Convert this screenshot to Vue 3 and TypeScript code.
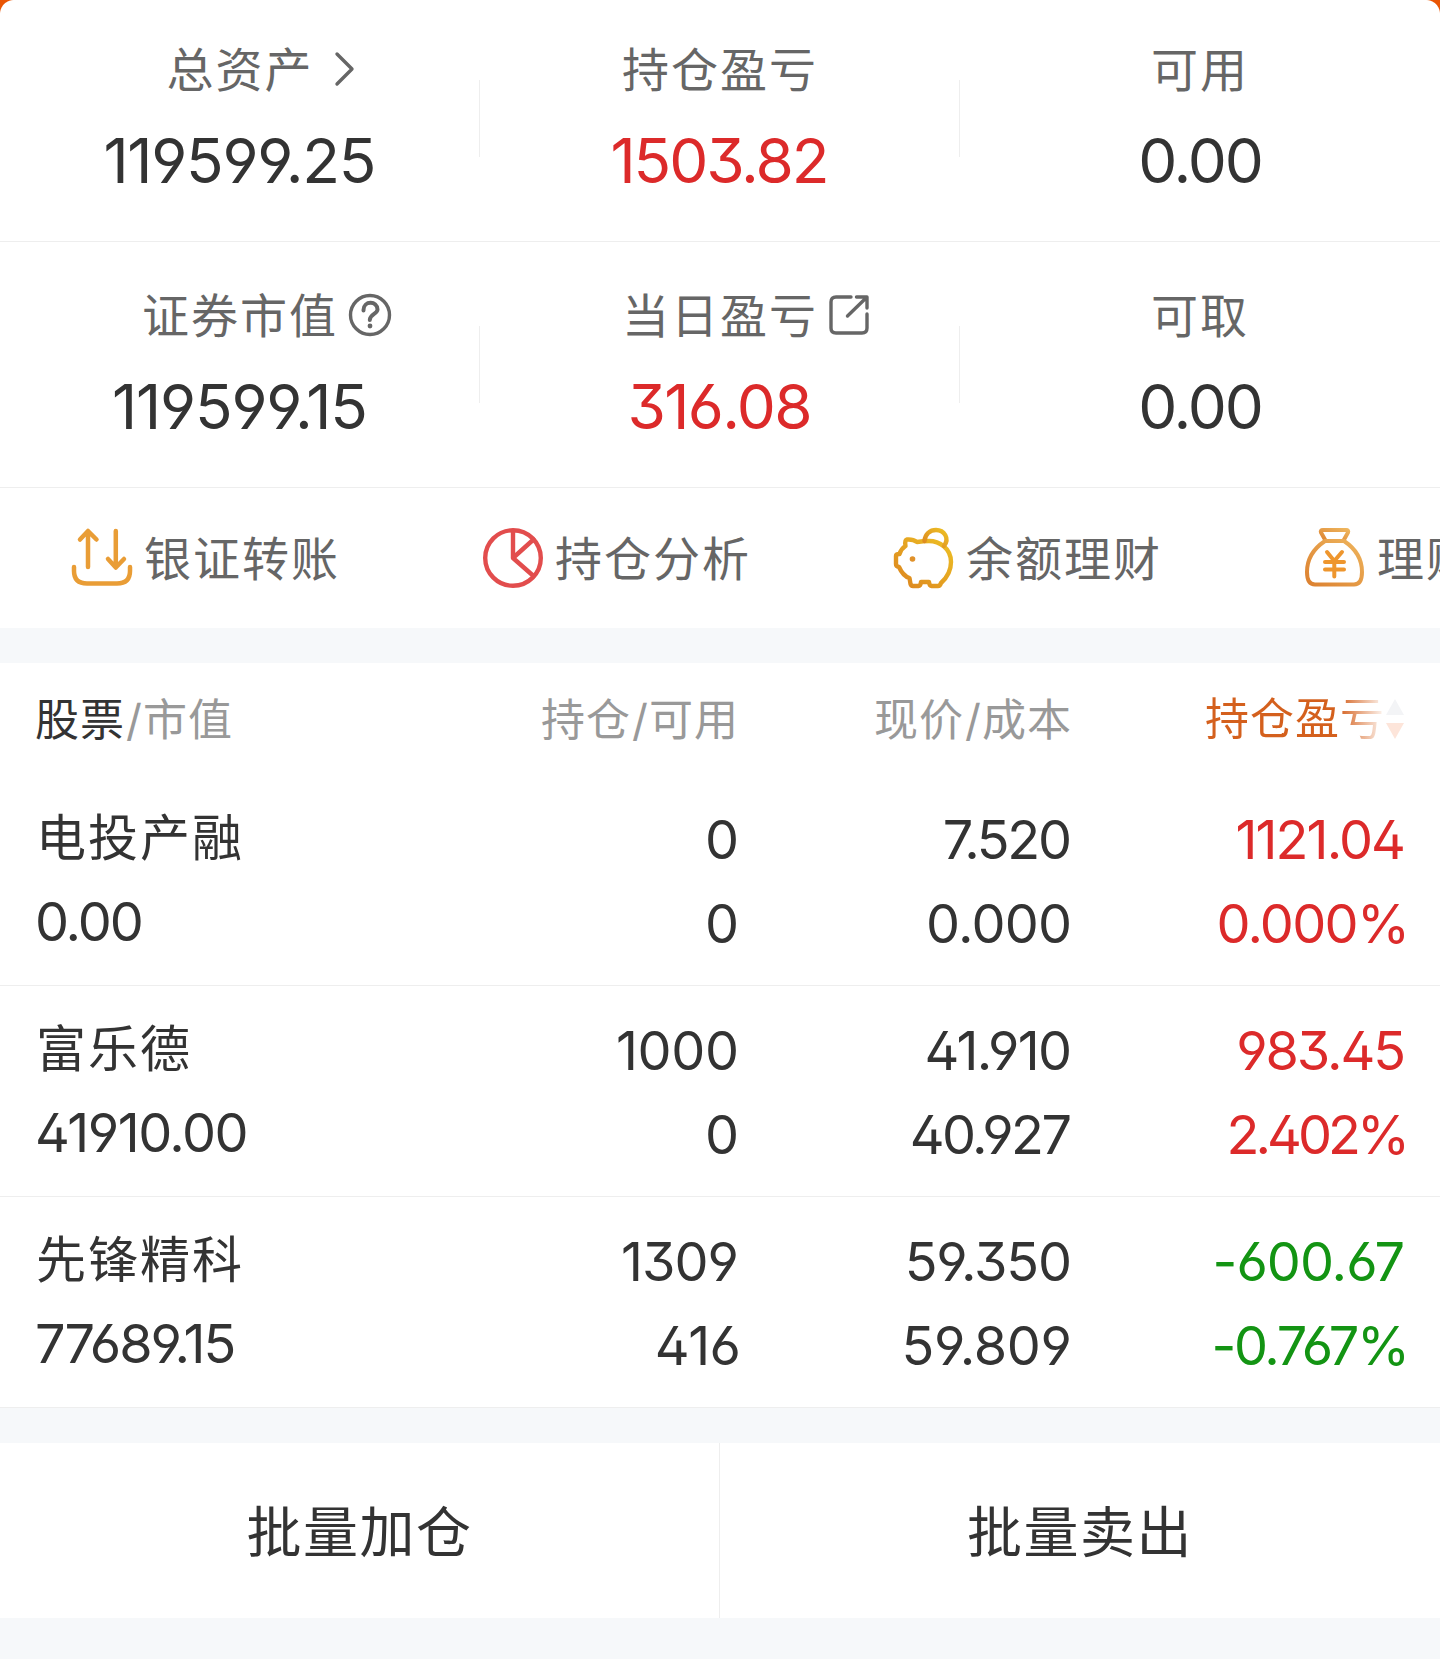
<script setup lang="ts">
type Tone = 'dark' | 'up' | 'down'
// s: letter spacing, dx: optical shift past the right edge of the column
interface Num { v: string; s?: number; dx?: number }
interface Stat { label: string; num: Num; tone: Tone; icon?: string }
interface Holding { name: string; value: Num; cells: [Num, Num][]; tone: Tone }

const stats: Stat[][] = [
  [
    { label: '总资产', num: { v: '119599.25', s: -1.3 }, tone: 'dark', icon: 'chevron' },
    { label: '持仓盈亏', num: { v: '1503.82', s: -2.1 }, tone: 'up' },
    { label: '可用', num: { v: '0.00', s: -2.1, dx: 2 }, tone: 'dark' },
  ],
  [
    { label: '证券市值', num: { v: '119599.15', s: -1.2 }, tone: 'dark', icon: 'help' },
    { label: '当日盈亏', num: { v: '316.08', s: -1.7 }, tone: 'up', icon: 'share' },
    { label: '可取', num: { v: '0.00', s: -2.1, dx: 2 }, tone: 'dark' },
  ],
]

const tools = [
  { icon: 'transfer', label: '银证转账' },
  { icon: 'pie', label: '持仓分析' },
  { icon: 'piggy', label: '余额理财' },
  { icon: 'bag', label: '理财' },
]

const holdings: Holding[] = [
  {
    name: '电投产融', value: { v: '0.00', s: -2.1 }, tone: 'up',
    cells: [
      [{ v: '0' }, { v: '0' }],
      [{ v: '7.520', s: -2.3 }, { v: '0.000', s: -0.8 }],
      [{ v: '1121.04', s: -1.9 }, { v: '0.000%', s: -1.7, dx: 4 }],
    ],
  },
  {
    name: '富乐德', value: { v: '41910.00', s: -1.5 }, tone: 'up',
    cells: [
      [{ v: '1000', s: -0.4 }, { v: '0' }],
      [{ v: '41.910', s: -1.7 }, { v: '40.927', s: -2.6 }],
      [{ v: '983.45', s: -2.1 }, { v: '2.402%', s: -4, dx: 4 }],
    ],
  },
  {
    name: '先锋精科', value: { v: '77689.15', s: -2 }, tone: 'down',
    cells: [
      [{ v: '1309', s: -1 }, { v: '416', s: -0.5, dx: 2 }],
      [{ v: '59.350', s: -1.2 }, { v: '59.809', s: -0.3 }],
      [{ v: '-600.67', s: -1, dx: -1 }, { v: '-0.767%', s: -2.3, dx: 4 }],
    ],
  },
]

const actions = ['批量加仓', '批量卖出']

const spacing = ({ s = 0, dx = 0 }: Num) => ({
  letterSpacing: `${s}px`,
  marginRight: `${-s - dx}px`,
})
</script>

<template>
  <div class="page">
    <section class="card">
      <div v-for="(row, r) in stats" :key="r" class="stat-row">
        <div v-for="s in row" :key="s.label" class="stat">
          <div class="stat-label">
            {{ s.label }}
            <svg v-if="s.icon === 'chevron'" class="ic-chevron" viewBox="0 0 20 36"><path d="M3 3 18 18 3 33" /></svg>
            <svg v-if="s.icon === 'help'" class="ic-help" viewBox="0 0 42 42">
              <circle cx="21" cy="21" r="19.5" />
              <path d="M14.5 16.5V16C14.5 6.500 28.500 6.500 28.500 15.500C28.500 20 21 20 20.800 26" stroke-width="4" />
              <circle cx="21" cy="32" r="2.4" class="dot" />
            </svg>
            <svg v-if="s.icon === 'share'" class="ic-share" viewBox="0 0 40 40">
              <path d="M22 2H7Q2 2 2 7V33Q2 38 7 38H33Q38 38 38 33V19M27.5 2H38V13M37 3 18.5 21" />
            </svg>
          </div>
          <div class="stat-num num" :class="s.tone"><span :style="spacing(s.num)">{{ s.num.v }}</span></div>
        </div>
      </div>

      <div class="tools">
        <div v-for="t in tools" :key="t.icon" class="tool">
          <svg v-if="t.icon === 'transfer'" viewBox="0 0 60 60" stroke="#e99d36" stroke-width="4.5">
            <path d="M16 39V4M8 11.5 16 3 24.5 11.5M43.8 3V38M36 31 43.8 39.5 52 31" />
            <path d="M2 39V43Q2 55.5 15 55.5H45Q58 55.5 58 43V39" />
          </svg>
          <svg v-else-if="t.icon === 'pie'" viewBox="0 0 60 60" stroke="#e24d4d" stroke-width="4.4">
            <circle cx="30" cy="30" r="27.8" />
            <path d="M30 3V30L50.5 11.5M30 30 50.5 48" />
          </svg>
          <svg v-else-if="t.icon === 'piggy'" viewBox="0 0 60 60" stroke="url(#pig)" stroke-width="4.4">
            <defs><linearGradient id="pig" x1="1" y1="0" x2="0" y2="1"><stop offset="0" stop-color="#edc024" /><stop offset="1" stop-color="#dc841f" /></linearGradient></defs>
            <path d="M23 14Q19 11 13 11.5Q10.5 12 11.5 18Q7 21 5.5 26Q2 26 2 28V36Q2 38.5 5 39Q9 48 15.5 50L16.5 56Q17 58 19 58H24.5Q26.5 58 27 54H35Q35.5 58 37.5 58H44Q46 58 47 55Q57 46 57 34C57 20 45 13 35 13Q29 13 23 14Z" />
            <path d="M30.5 13C31 6 36 2 42 2C50 2 56 10 50 18" />
            <circle cx="18.5" cy="31" r="2.8" fill="#e0912a" stroke="none" />
          </svg>
          <svg v-else viewBox="0 0 60 60" stroke="url(#bag)" stroke-width="4">
            <defs><linearGradient id="bag" x1="1" y1="0" x2="0" y2="1"><stop offset="0" stop-color="#eeb45c" /><stop offset="1" stop-color="#dc8130" /></linearGradient></defs>
            <path d="M20.5 12.5 16 4.5Q15 2 18 2H41Q44 2 43 4.5L38.5 12.5" />
            <path d="M20 13H39Q57 25 57 44Q57 56.5 49 56.5H10Q2 56.5 2 44Q2 25 20 13Z" />
            <path d="M22 24 29.3 33 37 24M29.3 34V48.5M20 34H39M20 41.5H39" stroke="#ee962e" />
          </svg>
          <span>{{ t.label }}</span>
        </div>
      </div>
    </section>

    <section class="table">
      <div class="head">
        <div class="c1"><b>股票</b><i>/</i>市值</div>
        <div class="c2">持仓<i>/</i>可用</div>
        <div class="c3">现价<i>/</i>成本</div>
        <div class="c4 sorted">
          <span>持仓盈亏</span>
          <svg class="sort" viewBox="0 0 20 42"><path d="M10 1 19 17H1Z" fill="#f3f4f6" /><path d="M1 25H19L10 41Z" fill="#fde5da" /></svg>
        </div>
      </div>
      <div v-for="h in holdings" :key="h.name" class="holding">
        <div class="c1">
          <div class="name">{{ h.name }}</div>
          <div class="num value"><span :style="spacing(h.value)">{{ h.value.v }}</span></div>
        </div>
        <div v-for="(pair, i) in h.cells" :key="i" class="cell num" :class="['c' + (i + 2), i === 2 ? h.tone : 'dark']">
          <div v-for="(n, j) in pair" :key="j"><span :style="spacing(n)">{{ n.v }}</span></div>
        </div>
      </div>
    </section>

    <section class="actions">
      <button v-for="a in actions" :key="a" type="button">{{ a }}</button>
    </section>
  </div>
</template>

<style>
body { margin: 0; background: #f6f8fa; }
</style>

<style scoped>
.page {
  display: flex; flex-direction: column; box-sizing: border-box;
  width: 1440px; height: 1659px; overflow: hidden; background: #f6f8fa; color: #333;
  font-family: Inter, 'Noto Sans CJK SC', sans-serif;
}
.card {
  height: 628px; overflow: hidden; flex: none;
  background:
    radial-gradient(circle at 14px 14px, #fff 13.5px, #e95504 14.5px) 0 0 / 14px 14px no-repeat,
    radial-gradient(circle at 0 14px, #fff 13.5px, #e95504 14.5px) 100% 0 / 14px 14px no-repeat,
    #fff;
}
.num { font-feature-settings: 'ss01', 'cv09', 'cv03', 'cv04'; white-space: nowrap; }
.dark { color: #333; }
.up { color: #dc2a2a; }
.down { color: #139413; }
svg { fill: none; stroke-linecap: round; stroke-linejoin: round; overflow: visible; flex: none; }

.stat-row { display: flex; height: 245px; border-bottom: 1px solid #eee; }
.stat-row:first-child { margin-top: -4px; }
.stat { width: 480px; display: flex; flex-direction: column; align-items: center; position: relative; }
.stat:not(:last-child)::after { content: ''; position: absolute; right: 0; top: 84px; width: 1px; height: 77px; background: #eee; }
.stat-label { position: relative; margin-top: 39px; height: 70px; line-height: 70px; font-size: 47px; letter-spacing: 2px; color: #666; white-space: nowrap; }
.stat-label svg { position: absolute; stroke: #666; stroke-width: 3.4; }
.ic-chevron { width: 20px; height: 36px; left: calc(100% + 20px); top: 16px; }
.ic-help { width: 42px; height: 42px; left: calc(100% + 11px); top: 13px; }
.ic-help .dot { fill: #666; stroke: none; }
.ic-share { width: 40px; height: 40px; left: calc(100% + 11px); top: 14px; }
.stat-num { margin-top: 16px; height: 80px; line-height: 80px; font-size: 62px; }

.tools { display: flex; height: 140px; align-items: center; padding-left: 72px; }
.tool { width: 411px; flex: none; display: flex; align-items: center; font-size: 47px; letter-spacing: 2px; line-height: 70px; color: #666; }
.tool svg { width: 60px; height: 60px; margin-right: 12px; }
.tool span { padding-top: 1px; margin-bottom: -1px; }

.table { margin-top: 35px; background: #fff; height: 745px; flex: none; }
.head, .holding { display: flex; padding-left: 35px; }
.c1 { width: 384px; }
.c2 { width: 320px; text-align: right; }
.c3 { width: 333px; text-align: right; }
.c4 { width: 334px; text-align: right; }
.head { height: 112px; line-height: 114px; font-size: 44px; letter-spacing: 1px; color: #999; white-space: nowrap; }
.head b { font-weight: 400; color: #333; }
.head i { font-style: normal; display: inline-block; width: 18px; text-align: center; letter-spacing: 0; }
.sorted { display: flex; justify-content: flex-end; align-items: center; width: 333px; }
.sorted span { background: linear-gradient(90deg, #d4601d 74%, #fbeee6 98%); background-clip: text; -webkit-background-clip: text; color: transparent; }
.sort { width: 20px; height: 42px; }
.holding { height: 210px; border-bottom: 1px solid #eee; }
.name { margin-top: 26px; height: 74px; line-height: 74px; font-size: 50px; letter-spacing: 2px; padding-left: 1px; }
.value { margin-top: 10px; height: 74px; line-height: 74px; font-size: 54px; }
.cell { font-size: 54px; padding-top: 28px; }
.cell div { height: 84px; line-height: 74px; }

.actions { display: flex; height: 175px; margin-top: 35px; background: #fff; flex: none; }
.actions button { width: 720px; box-sizing: border-box; border: 0; padding: 0 0 6px; background: none; font: inherit; font-size: 55px; letter-spacing: 1.5px; color: #333; }
.actions button:first-child { border-right: 1px solid #eee; }
</style>
